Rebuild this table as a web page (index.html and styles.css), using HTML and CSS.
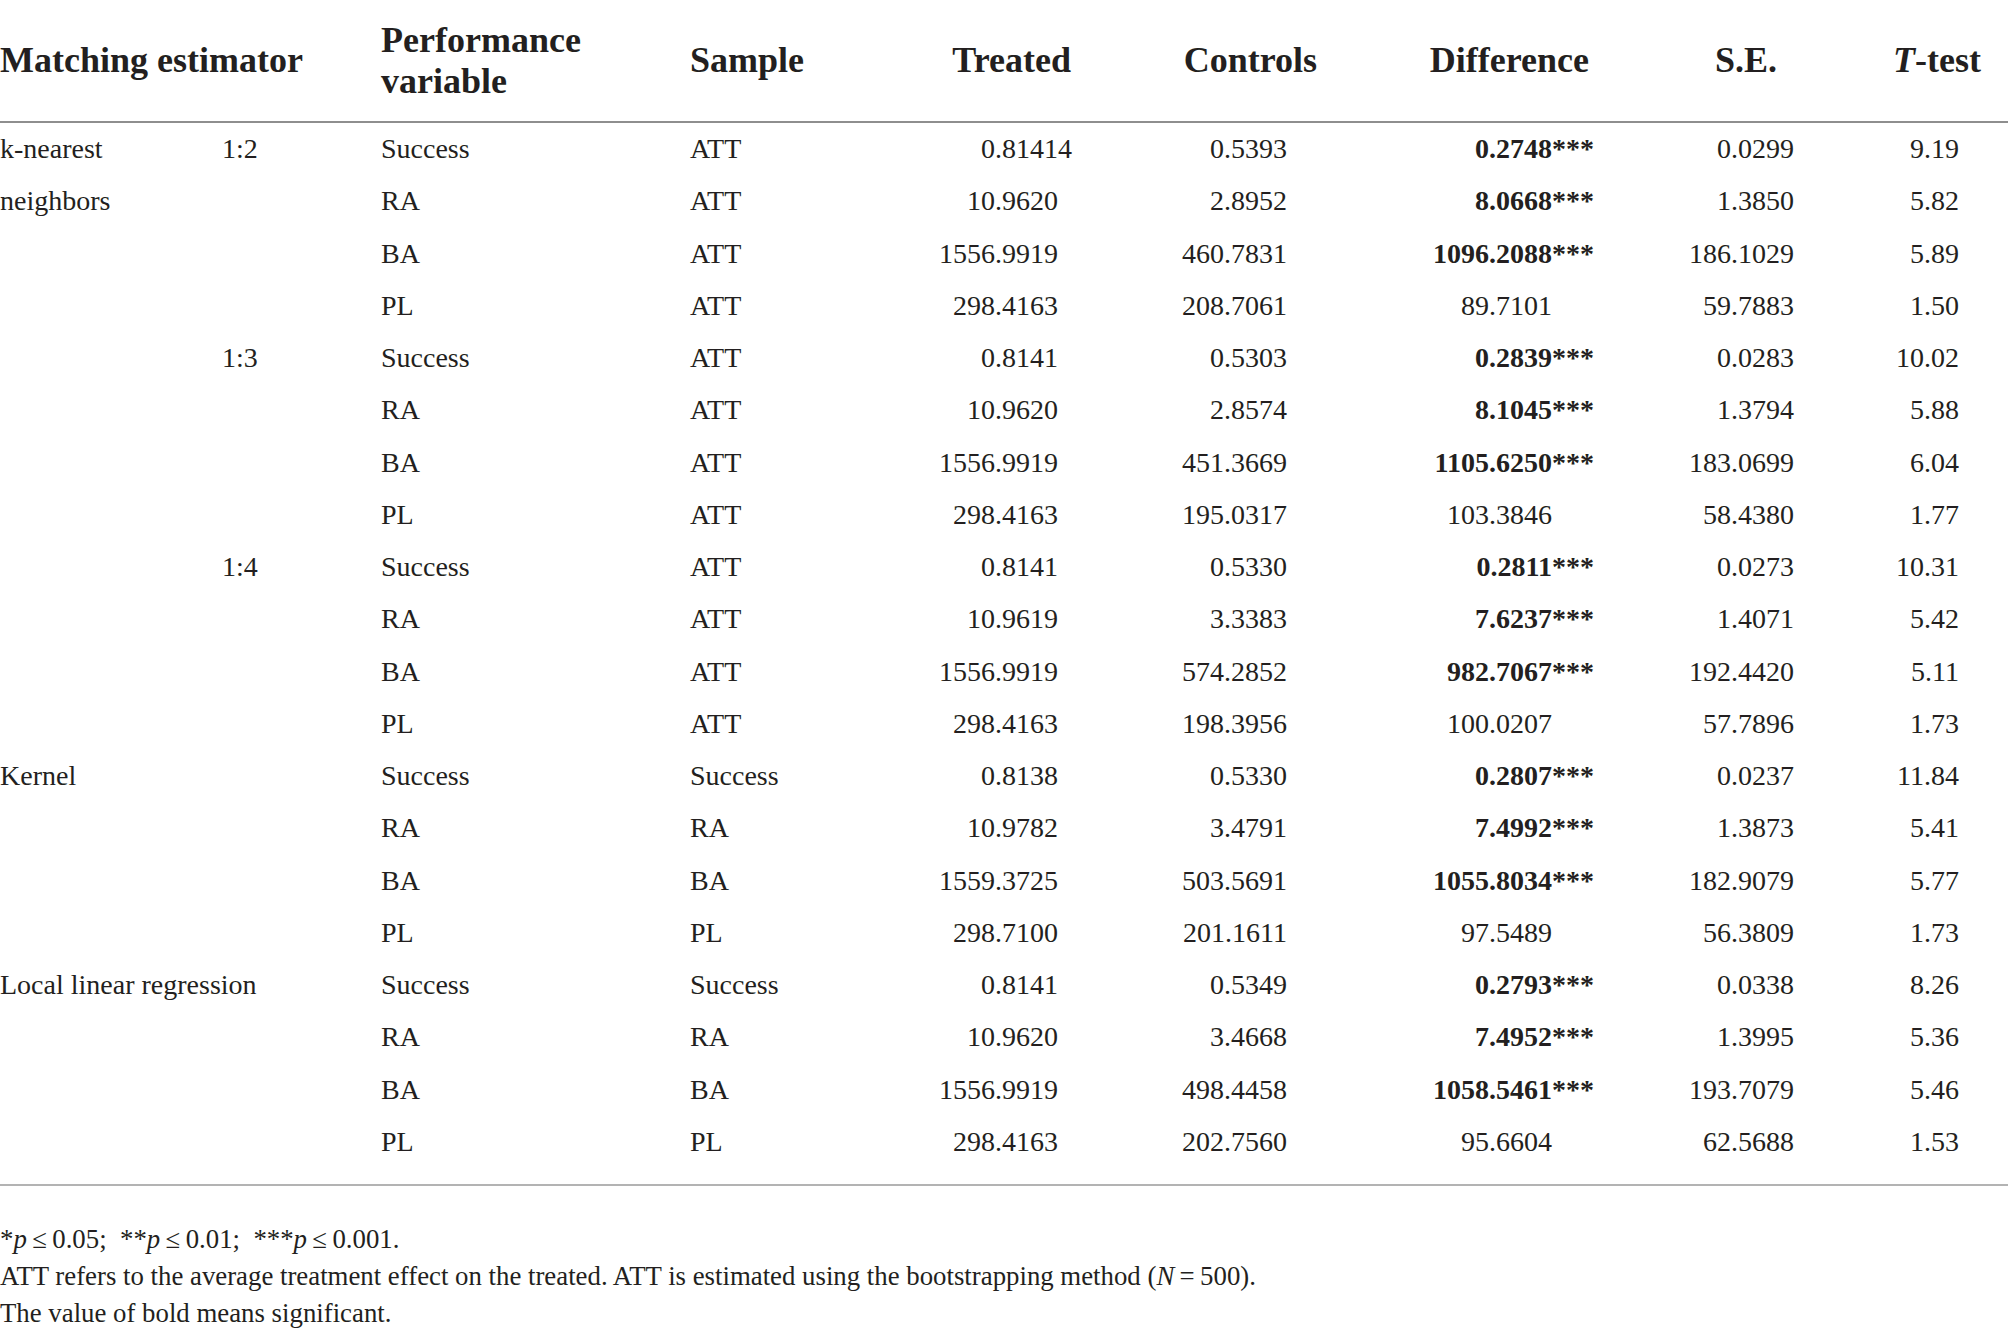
FILE: index.html
```html
<!DOCTYPE html>
<html lang="en">
<head>
<meta charset="utf-8">
<title>Matching estimator results</title>
<link rel="stylesheet" href="styles.css">
</head>
<body>
<div class="wrap">
<table class="tbl">
<colgroup>
<col class="c-a1"><col class="c-a2"><col class="c-b"><col class="c-c"><col class="c-d"><col class="c-e"><col class="c-f"><col class="c-g"><col class="c-h">
</colgroup>
<thead>
<tr>
<th colspan="2" class="tl">Matching estimator</th>
<th class="tl">Performance<br>variable</th>
<th class="tl">Sample</th>
<th class="hd">Treated</th>
<th class="he">Controls</th>
<th class="hf">Difference</th>
<th class="hg">S.E.</th>
<th class="hh"><i>T</i>-test</th>
</tr>
</thead>
<tbody>
<tr><td rowspan="12" class="grp">k-nearest<br>neighbors</td><td rowspan="4" class="grp">1:2</td><td>Success</td><td>ATT</td><td class="nd">0.8141<span class="ov">4</span></td><td class="ne">0.5393</td><td class="nf"><b>0.2748<span class="st">***</span></b></td><td class="ng">0.0299</td><td class="nh">9.19</td></tr>
<tr><td>RA</td><td>ATT</td><td class="nd">10.9620</td><td class="ne">2.8952</td><td class="nf"><b>8.0668<span class="st">***</span></b></td><td class="ng">1.3850</td><td class="nh">5.82</td></tr>
<tr><td>BA</td><td>ATT</td><td class="nd">1556.9919</td><td class="ne">460.7831</td><td class="nf"><b>1096.2088<span class="st">***</span></b></td><td class="ng">186.1029</td><td class="nh">5.89</td></tr>
<tr><td>PL</td><td>ATT</td><td class="nd">298.4163</td><td class="ne">208.7061</td><td class="nf">89.7101</td><td class="ng">59.7883</td><td class="nh">1.50</td></tr>
<tr><td rowspan="4" class="grp">1:3</td><td>Success</td><td>ATT</td><td class="nd">0.8141</td><td class="ne">0.5303</td><td class="nf"><b>0.2839<span class="st">***</span></b></td><td class="ng">0.0283</td><td class="nh">10.02</td></tr>
<tr><td>RA</td><td>ATT</td><td class="nd">10.9620</td><td class="ne">2.8574</td><td class="nf"><b>8.1045<span class="st">***</span></b></td><td class="ng">1.3794</td><td class="nh">5.88</td></tr>
<tr><td>BA</td><td>ATT</td><td class="nd">1556.9919</td><td class="ne">451.3669</td><td class="nf"><b>1105.6250<span class="st">***</span></b></td><td class="ng">183.0699</td><td class="nh">6.04</td></tr>
<tr><td>PL</td><td>ATT</td><td class="nd">298.4163</td><td class="ne">195.0317</td><td class="nf">103.3846</td><td class="ng">58.4380</td><td class="nh">1.77</td></tr>
<tr><td rowspan="4" class="grp">1:4</td><td>Success</td><td>ATT</td><td class="nd">0.8141</td><td class="ne">0.5330</td><td class="nf"><b>0.2811<span class="st">***</span></b></td><td class="ng">0.0273</td><td class="nh">10.31</td></tr>
<tr><td>RA</td><td>ATT</td><td class="nd">10.9619</td><td class="ne">3.3383</td><td class="nf"><b>7.6237<span class="st">***</span></b></td><td class="ng">1.4071</td><td class="nh">5.42</td></tr>
<tr><td>BA</td><td>ATT</td><td class="nd">1556.9919</td><td class="ne">574.2852</td><td class="nf"><b>982.7067<span class="st">***</span></b></td><td class="ng">192.4420</td><td class="nh">5.11</td></tr>
<tr><td>PL</td><td>ATT</td><td class="nd">298.4163</td><td class="ne">198.3956</td><td class="nf">100.0207</td><td class="ng">57.7896</td><td class="nh">1.73</td></tr>
<tr><td rowspan="4" colspan="2" class="grp">Kernel</td><td>Success</td><td>Success</td><td class="nd">0.8138</td><td class="ne">0.5330</td><td class="nf"><b>0.2807<span class="st">***</span></b></td><td class="ng">0.0237</td><td class="nh">11.84</td></tr>
<tr><td>RA</td><td>RA</td><td class="nd">10.9782</td><td class="ne">3.4791</td><td class="nf"><b>7.4992<span class="st">***</span></b></td><td class="ng">1.3873</td><td class="nh">5.41</td></tr>
<tr><td>BA</td><td>BA</td><td class="nd">1559.3725</td><td class="ne">503.5691</td><td class="nf"><b>1055.8034<span class="st">***</span></b></td><td class="ng">182.9079</td><td class="nh">5.77</td></tr>
<tr><td>PL</td><td>PL</td><td class="nd">298.7100</td><td class="ne">201.1611</td><td class="nf">97.5489</td><td class="ng">56.3809</td><td class="nh">1.73</td></tr>
<tr><td rowspan="4" colspan="2" class="grp">Local linear regression</td><td>Success</td><td>Success</td><td class="nd">0.8141</td><td class="ne">0.5349</td><td class="nf"><b>0.2793<span class="st">***</span></b></td><td class="ng">0.0338</td><td class="nh">8.26</td></tr>
<tr><td>RA</td><td>RA</td><td class="nd">10.9620</td><td class="ne">3.4668</td><td class="nf"><b>7.4952<span class="st">***</span></b></td><td class="ng">1.3995</td><td class="nh">5.36</td></tr>
<tr><td>BA</td><td>BA</td><td class="nd">1556.9919</td><td class="ne">498.4458</td><td class="nf"><b>1058.5461<span class="st">***</span></b></td><td class="ng">193.7079</td><td class="nh">5.46</td></tr>
<tr><td>PL</td><td>PL</td><td class="nd">298.4163</td><td class="ne">202.7560</td><td class="nf">95.6604</td><td class="ng">62.5688</td><td class="nh">1.53</td></tr>
</tbody>
</table>
</div>
<div class="notes">
<p>*<i>p</i>&thinsp;≤&thinsp;0.05;&ensp;**<i>p</i>&thinsp;≤&thinsp;0.01;&ensp;***<i>p</i>&thinsp;≤&thinsp;0.001.</p>
<p>ATT refers to the average treatment effect on the treated. ATT is estimated using the bootstrapping method (<i>N</i>&thinsp;=&thinsp;500).</p>
<p>The value of bold means significant.</p>
</div>
</body>
</html>
```
FILE: styles.css
```css
html, body {
  margin: 0;
  padding: 0;
  background: #ffffff;
}
body {
  font-family: "Liberation Serif", "Times New Roman", serif;
  color: #231f20;
  width: 2008px;
}
.wrap {
  padding-bottom: 16px;
  border-bottom: 2px solid #b3b3b3;
}
.tbl {
  width: 2008px;
  table-layout: fixed;
  border-collapse: collapse;
  border-spacing: 0;
}
.c-a1 { width: 222px; }
.c-a2 { width: 159px; }
.c-b { width: 309px; }
.c-c { width: 210px; }
.c-d { width: 200px; }
.c-e { width: 230px; }
.c-f { width: 280px; }
.c-g { width: 210px; }
.c-h { width: 188px; }

.tbl th {
  height: 121px;
  padding: 0;
  font-size: 36px;
  line-height: 41px;
  font-weight: bold;
  vertical-align: middle;
  border-bottom: 2px solid #8e8e8e;
  white-space: nowrap;
}
.tbl th.tl { text-align: left; }
.tbl th.hd { text-align: right; padding-right: 29px; }
.tbl th.he { text-align: right; padding-right: 13px; }
.tbl th.hf { text-align: right; padding-right: 21px; }
.tbl th.hg { text-align: right; padding-right: 43px; }
.tbl th.hh { text-align: right; padding-right: 27px; }

.tbl td {
  height: 52.25px;
  padding: 0;
  font-size: 28px;
  line-height: 52.25px;
  text-align: left;
  vertical-align: top;
  white-space: nowrap;
}
.tbl td.grp { overflow: visible; }
.tbl td.nd { text-align: right; padding-right: 42px; }
.tbl td.ne { text-align: right; padding-right: 43px; }
.tbl td.nf { text-align: right; padding-right: 58px; }
.tbl td.ng { text-align: right; padding-right: 26px; }
.tbl td.nh { text-align: right; padding-right: 49px; }
.tbl td b { font-weight: bold; }
.st { margin-right: -1.5em; }
.ov { margin-right: -0.5em; }

.notes {
  padding-top: 35px;
  font-size: 26.8px;
  line-height: 37px;
}
.notes p { margin: 0; }
```
